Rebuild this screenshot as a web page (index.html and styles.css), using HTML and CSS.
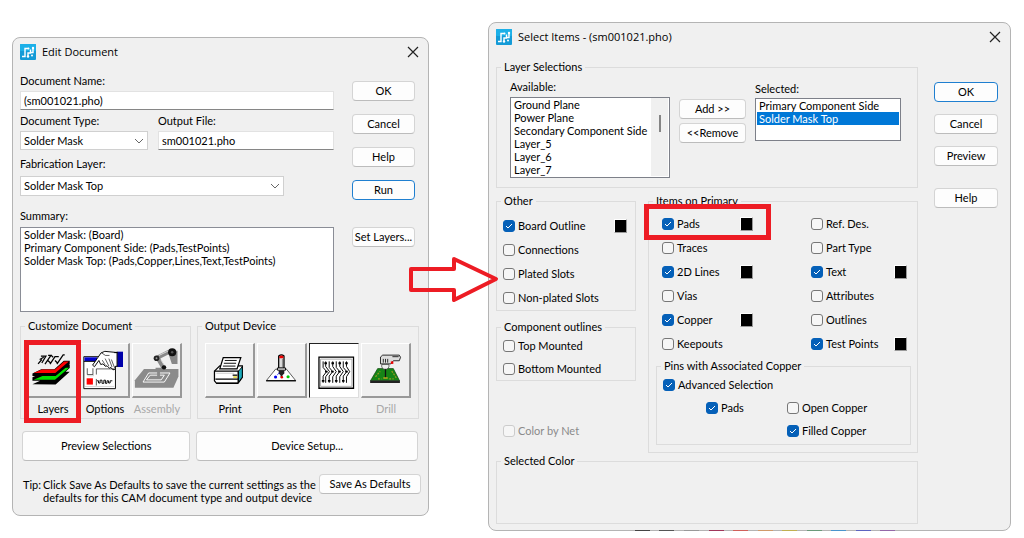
FILE: index.html
```html
<!DOCTYPE html>
<html lang="en">
<head>
    <meta charset="UTF-8">
    <meta name="viewport" content="width=device-width, initial-scale=1.0">
    <title>Edit Document</title>
    <link rel="stylesheet" href="styles.css">
</head>
<body>
    <svg class="symbols" aria-hidden="true">
        <symbol id="app-logo" viewBox="0 0 16 16">
            <rect width="16" height="16" rx="1" fill="#149bd7"/>
            <rect width="16" height="7" rx="1" fill="#1cb0e8"/>
            <path d="M2 12.500h3V4.500h3.500M8 13V9h2.500V5.500M10.500 8.500H13V4" fill="none" stroke="#fff" stroke-width="1.400"/>
            <circle cx="8.500" cy="4.500" r="1" fill="#fff"/>
            <circle cx="13" cy="4" r="1.200" fill="#fff"/>
            <circle cx="8" cy="12.500" r="1.200" fill="#fff"/>
            <circle cx="12" cy="11.500" r="1" fill="#fff"/>
        </symbol>
        <symbol id="close-x" viewBox="0 0 12 12">
            <path d="M1 1l10 10M11 1L1 11" stroke="#222" stroke-width="1.200"/>
        </symbol>
    </svg>

    <main class="desktop">
        <section class="window window-edit">
            <header class="title-bar">
                <svg class="logo"><use href="#app-logo"/></svg>
                <h1>Edit Document</h1>
                <button class="close" aria-label="Close"><svg><use href="#close-x"/></svg></button>
            </header>

            <div class="edit-top">
                <div class="fields">
                    <div class="field">
                        <label for="docName">Document Name:</label>
                        <input type="text" id="docName" value="(sm001021.pho)">
                    </div>
                    <div class="field-row">
                        <div class="field">
                            <label for="docType">Document Type:</label>
                            <select id="docType"><option>Solder Mask</option></select>
                        </div>
                        <div class="field">
                            <label for="outFile">Output File:</label>
                            <input type="text" id="outFile" value="sm001021.pho">
                        </div>
                    </div>
                    <div class="field fab">
                        <label for="fabLayer">Fabrication Layer:</label>
                        <select id="fabLayer"><option>Solder Mask Top</option></select>
                    </div>
                    <div class="field summary">
                        <label for="summary">Summary:</label>
                        <textarea id="summary" readonly>Solder Mask: (Board)
Primary Component Side: (Pads,TestPoints)
Solder Mask Top: (Pads,Copper,Lines,Text,TestPoints)</textarea>
                    </div>
                </div>
                <div class="side-buttons">
                    <button class="btn">OK</button>
                    <button class="btn">Cancel</button>
                    <button class="btn">Help</button>
                    <button class="btn default">Run</button>
                    <button class="btn apart">Set Layers...</button>
                </div>
            </div>

            <div class="tool-groups">
                <fieldset class="tools">
                    <legend>Customize Document</legend>
                    <div class="tool highlighted">
                        <button id="layers" aria-labelledby="layersText">
                            <svg viewBox="57 70 150 165">
                                <path d="M68 198l28-13h42l32-27h17l-45 41zM68 176l28-13h42l32-27h17v10l-45 41H68z" fill="#000"/>
                                <path d="M72 184l28-12h40l32-27h13l-45 39z" fill="#00e000"/>
                                <path d="M68 164l28-14h42l30-27h19v11l-45 38H68z" fill="#000"/>
                                <path d="M72 162l26-11h42l29-26h15l-43 37z" fill="#f00"/>
                                <path d="M86 133l12-14M95 108h16l-13 22M104 112l-13 7M108 134l19-28h-9M117 122l10 9M124 134l16-24h12M134 112l-6-6M140 122l8 8M146 134l20-30h5" fill="none" stroke="#000" stroke-width="4"/>
                            </svg>
                        </button>
                        <span id="layersText">Layers</span>
                    </div>
                    <div class="tool">
                        <button aria-labelledby="optionsText">
                            <svg viewBox="213 70 150 165">
                                <path d="M222 110h101v102H222z" fill="#fff" stroke="#000" stroke-width="3"/>
                                <path d="M224 112h40v12h-40z" fill="#00c"/>
                                <path d="M222 125h46" stroke="#000" stroke-width="3"/>
                                <path d="M250 137l27-39 12-5 42 4v43l-9 1v9l-7 2-7-8-4 3-8-8-5 2-8-8-7 2-6-13-14 20z" fill="#fff" stroke="#000" stroke-width="3"/>
                                <path d="M281 121l10 17M290 116l12 24M302 116l10 27M310 119l10 26M279 98l12 8h13" fill="none" stroke="#000" stroke-width="2"/>
                                <path d="M329 94h18v49h-18z" fill="#00a"/>
                                <path d="M328 94v49M319 97h10" stroke="#000" stroke-width="3"/>
                                <path d="M233 147v20h18v-20M262 167v-18h57M262 202v-21" fill="none" stroke="#000" stroke-width="2"/>
                                <path d="M231 179h20v20h-20z" fill="#f00"/>
                                <path d="M264 187h5v7h5v-9h6v10h6v-10h5v10h5v-8h5v7h5v-7h7" fill="none" stroke="#000" stroke-width="3"/>
                                <path d="M225 205h94M253 147v24h-20" fill="none" stroke="#bbb" stroke-width="2"/>
                            </svg>
                        </button>
                        <span id="optionsText">Options</span>
                    </div>
                    <div class="tool disabled">
                        <button disabled aria-labelledby="assemblyText">
                            <svg viewBox="368 70 150 165">
                                <path d="M403 149h110v24l-16 36H374v-24z" fill="#8b8b8b"/>
                                <path d="M418 162h68l-18 29h-68z" fill="#8b8b8b" stroke="#fff" stroke-width="3"/>
                                <path d="M423 169h45l-10 15h-47z" fill="none" stroke="#fff" stroke-width="3"/>
                                <path d="M484 94l-38 19 19 32" fill="none" stroke="#888" stroke-width="13"/>
                                <path d="M490 91h20v42h-18l-9-27zM440 145h26v12h-12v22h-9v-22h-5z" fill="#888"/>
                                <path d="M451 106l31-15M469 139l-12-19" stroke="#ddd" stroke-width="3"/>
                                <circle cx="493" cy="96" r="13" fill="#111"/>
                                <circle cx="443" cy="115" r="9" fill="#222"/>
                                <circle cx="467" cy="144" r="7" fill="#111"/>
                                <circle cx="493" cy="96" r="4" fill="#555"/>
                                <circle cx="443" cy="115" r="3" fill="#999"/>
                            </svg>
                        </button>
                        <span id="assemblyText">Assembly</span>
                    </div>
                </fieldset>
                <fieldset class="tools">
                    <legend>Output Device</legend>
                    <div class="tool">
                        <button aria-labelledby="printText">
                            <svg viewBox="16 70 150 165">
                                <path d="M43 156l17-17h72v37l-14 19H50l-7-8z" fill="#fff" stroke="#000" stroke-width="4"/>
                                <path d="M119 157l13-15v33l-13 18z" fill="#19a9b9" stroke="#000" stroke-width="3"/>
                                <path d="M43 156h76v37M50 194h68M46 182h71" fill="none" stroke="#000" stroke-width="4"/>
                                <path d="M60 149l11-36h56l-12 36z" fill="#fff" stroke="#000" stroke-width="4"/>
                                <path d="M76 122h38M73 131h39M70 140h40" stroke="#000" stroke-width="3"/>
                                <path d="M49 163h57" stroke="#ccc" stroke-width="3"/>
                                <path d="M101 169h15" stroke="#000" stroke-width="4"/>
                                <path d="M103 175h12" stroke="#dc0" stroke-width="4"/>
                            </svg>
                        </button>
                        <span id="printText">Print</span>
                    </div>
                    <div class="tool">
                        <button aria-labelledby="penText">
                            <svg viewBox="173 70 150 165">
                                <path d="M229 150h35l29 36H200z" fill="#fff" stroke="#000" stroke-width="2"/>
                                <path d="M199 187h95" stroke="#000" stroke-width="4"/>
                                <path d="M239 108q9-8 17 0v39h-17z" fill="#ddd" stroke="#000" stroke-width="4"/>
                                <path d="M241 108q7-4 13 0v7h-13z" fill="#e00"/>
                                <path d="M251 117v28" stroke="#888" stroke-width="3"/>
                                <path d="M235 146h26v7h-26z" fill="#fff" stroke="#000" stroke-width="3"/>
                                <path d="M239 153h18v11l-6 5v7h-6v-7l-6-5z" fill="#222"/>
                                <circle cx="229" cy="175" r="5" fill="#00e"/>
                                <circle cx="269" cy="174" r="5" fill="#0c0"/>
                                <circle cx="249" cy="176" r="4" fill="#e00"/>
                                <path d="M234 169l8-9" stroke="#00e" stroke-width="2"/>
                            </svg>
                        </button>
                        <span id="penText">Pen</span>
                    </div>
                    <div class="tool pressed">
                        <button aria-pressed="true" aria-labelledby="photoText">
                            <svg viewBox="331 70 150 165">
                                <path d="M359 111h108v97H359z" fill="#fff" stroke="#000" stroke-width="4"/>
                                <path d="M364 117h98v85h-98z" fill="none" stroke="#aaa" stroke-width="3"/>
                                <g fill="none" stroke="#000" stroke-width="3">
                                    <path d="M372 124v19l11 13-11 14v21M380 124v16l12 16-12 16v19M391 124v19l11 13-11 14v21M402 124v16l11 16-11 16v19M413 124v19l11 13-11 14v21M424 124v16l11 16-11 16v19M435 124v19l11 13-11 14v21M445 124v16l10 16-10 16v19"/>
                                    <path d="M376 130h8M398 130h8M420 130h8M441 130h8M368 185h8M387 185h8M409 185h8M431 185h8M378 156h8M397 156h8M419 156h8M441 156h8" stroke-width="6"/>
                                </g>
                            </svg>
                        </button>
                        <span id="photoText">Photo</span>
                    </div>
                    <div class="tool disabled">
                        <button disabled aria-labelledby="drillText">
                            <svg viewBox="488 70 150 165">
                                <path d="M538 148h50l20 39H515z" fill="#168416" stroke="#053c05" stroke-width="2"/>
                                <path d="M514 186h95v8h-95z" fill="#222"/>
                                <path d="M531 174l15-17M583 156l16 24M539 181h11M575 181h14" stroke="#9a9a20" stroke-width="4" stroke-dasharray="6 4"/>
                                <path d="M547 111l7-6h53l4 7-4 11h-19l-8 10h-33z" fill="#ddd" stroke="#222" stroke-width="3"/>
                                <path d="M556 117v12M563 117v12M570 117v12M585 110h20" stroke="#222" stroke-width="3"/>
                                <path d="M580 125h8v8h-8z" fill="#e00"/>
                                <path d="M551 135h23v8l-6 7h-11l-6-7z" fill="#eee" stroke="#222" stroke-width="2"/>
                                <path d="M563 150v28" stroke="#111" stroke-width="4"/>
                                <path d="M556 178h14" stroke="#e0b020" stroke-width="4"/>
                            </svg>
                        </button>
                        <span id="drillText">Drill</span>
                    </div>
                </fieldset>
            </div>

            <div class="wide-buttons">
                <button class="btn">Preview Selections</button>
                <button class="btn">Device Setup...</button>
            </div>

            <div class="tip-row">
                <span>Tip:</span>
                <p>Click Save As Defaults to save the current settings as the<br>defaults for this CAM document type and output device</p>
                <button class="btn">Save As Defaults</button>
            </div>
        </section>

        <section class="window window-select">
            <header class="title-bar">
                <svg class="logo"><use href="#app-logo"/></svg>
                <h1>Select Items - (sm001021.pho)</h1>
                <button class="close" aria-label="Close"><svg><use href="#close-x"/></svg></button>
            </header>

            <div class="select-body">
                <div class="select-main">
                    <fieldset>
                        <legend>Layer Selections</legend>
                        <div class="layers">
                            <div class="list-col">
                                <label for="available">Available:</label>
                                <div class="list-frame">
                                    <select id="available" size="6">
                                        <option>Ground Plane</option>
                                        <option>Power Plane</option>
                                        <option>Secondary Component Side</option>
                                        <option>Layer_5</option>
                                        <option>Layer_6</option>
                                        <option>Layer_7</option>
                                    </select>
                                    <div class="rail"><span></span></div>
                                </div>
                            </div>
                            <div class="move-buttons">
                                <button class="btn">Add &gt;&gt;</button>
                                <button class="btn">&lt;&lt;Remove</button>
                            </div>
                            <div class="list-col selected">
                                <label for="selected">Selected:</label>
                                <div class="list-frame">
                                    <select id="selected" size="3">
                                        <option>Primary Component Side</option>
                                        <option selected>Solder Mask Top</option>
                                    </select>
                                </div>
                            </div>
                        </div>
                    </fieldset>

                    <div class="item-groups">
                        <div class="left-groups">
                            <fieldset>
                                <legend>Other</legend>
                                <div class="checks other">
                                    <div class="check-row">
                                        <label class="check"><input type="checkbox" checked>Board Outline</label>
                                        <span class="swatch"></span>
                                    </div>
                                    <label class="check"><input type="checkbox">Connections</label>
                                    <label class="check"><input type="checkbox">Plated Slots</label>
                                    <label class="check"><input type="checkbox">Non-plated Slots</label>
                                </div>
                            </fieldset>
                            <fieldset>
                                <legend>Component outlines</legend>
                                <div class="checks compact">
                                    <label class="check"><input type="checkbox">Top Mounted</label>
                                    <label class="check"><input type="checkbox">Bottom Mounted</label>
                                </div>
                            </fieldset>
                            <label class="check by-net"><input type="checkbox" disabled>Color by Net</label>
                        </div>

                        <fieldset class="items">
                            <legend>Items on Primary</legend>
                            <div class="item-grid">
                                <label class="check first"><input type="checkbox" checked>Pads</label>
                                <span class="swatch"></span>
                                <label class="check second"><input type="checkbox">Ref. Des.</label>
                                <label class="check first"><input type="checkbox">Traces</label>
                                <label class="check second"><input type="checkbox">Part Type</label>
                                <label class="check first"><input type="checkbox" checked>2D Lines</label>
                                <span class="swatch"></span>
                                <label class="check second"><input type="checkbox" checked>Text</label>
                                <span class="swatch"></span>
                                <label class="check first"><input type="checkbox">Vias</label>
                                <label class="check second"><input type="checkbox">Attributes</label>
                                <label class="check first"><input type="checkbox" checked>Copper</label>
                                <span class="swatch"></span>
                                <label class="check second"><input type="checkbox">Outlines</label>
                                <label class="check first"><input type="checkbox">Keepouts</label>
                                <label class="check second"><input type="checkbox" checked>Test Points</label>
                                <span class="swatch"></span>
                            </div>
                            <fieldset class="pins">
                                <legend>Pins with Associated Copper</legend>
                                <div class="pin-grid">
                                    <label class="check advanced"><input type="checkbox" checked>Advanced Selection</label>
                                    <label class="check pads"><input type="checkbox" checked>Pads</label>
                                    <label class="check"><input type="checkbox">Open Copper</label>
                                    <label class="check filled"><input type="checkbox" checked>Filled Copper</label>
                                </div>
                            </fieldset>
                        </fieldset>
                    </div>

                    <fieldset class="selected-color">
                        <legend>Selected Color</legend>
                    </fieldset>
                </div>

                <div class="side-buttons">
                    <button class="btn default">OK</button>
                    <button class="btn">Cancel</button>
                    <button class="btn">Preview</button>
                    <button class="btn apart">Help</button>
                </div>
            </div>

            <!-- edge of the palette behind the dialog -->
            <div class="palette">
                <i class="c1"></i><i class="c2"></i><i class="c3"></i><i class="c4"></i><i class="c5"></i><i class="c6"></i>
                <i class="c7"></i><i class="c8"></i><i class="c9"></i><i class="c10"></i><i class="c11"></i>
            </div>
        </section>

        <svg class="arrow" viewBox="0 0 90 48">
            <path d="M2 13h43V3l42 20-42 21V34H2z" fill="none" stroke="#ed1c24" stroke-width="4" stroke-linejoin="round"/>
        </svg>
    </main>
</body>
</html>
```
FILE: styles.css
```css
*,
*::after {
    box-sizing: border-box;
}

body {
    margin: 0;
    background-color: #fff;
    color: #000;
    font: 11px/14px Lato, "Liberation Sans", Arial, sans-serif;
}

button,
input,
select,
textarea {
    margin: 0;
    font: inherit;
    color: inherit;
}

.symbols {
    display: none;
}

.desktop {
    position: relative;
    display: grid;
    grid-template-columns: 417fr 523fr;
    gap: 59px;
    align-items: start;
    padding: 22px 13px 0 12px;
}

.window {
    position: relative;
    min-width: 0;
    background-color: #f0f0f0;
    border: 1px solid #b4b4b4;
    border-radius: 8px;
}

.window-edit {
    margin-top: 15px;
    padding-bottom: 11px;
}

.title-bar {
    display: flex;
    align-items: center;
    height: 28px;
    padding: 0 8px 0 7px;
}

.title-bar h1 {
    flex: 1;
    margin: 0 0 0 6px;
    font: 11px/16px "Open Sans", "Noto Sans", sans-serif;
}

.logo {
    width: 16px;
    height: 16px;
}

.close {
    display: flex;
    padding: 1px;
    border: 0;
    background: none;
}

.close svg {
    width: 12px;
    height: 12px;
}

/* Buttons */
.btn {
    height: 20px;
    padding: 0;
    background-color: #fdfdfd;
    border: 1px solid #d4d4d4;
    border-bottom-color: #bcbcbc;
    border-radius: 4px;
    text-align: center;
    white-space: nowrap;
}

.btn.default {
    border-color: #1f7fd0;
}

.side-buttons {
    display: flex;
    flex-direction: column;
}

/* Edit Document */
.edit-top {
    display: grid;
    grid-template-columns: 1fr 63px;
    gap: 18px;
    padding: 8px 13px 0 7px;
}

.edit-top .side-buttons {
    gap: 13px;
    padding-top: 7px;
}

.edit-top .apart {
    margin-top: 14px;
}

.field {
    display: flex;
    flex-direction: column;
    gap: 3px;
    margin-bottom: 4px;
}

.field-row {
    display: grid;
    grid-template-columns: 128fr 176fr;
    gap: 10px;
}

.field input,
.field select {
    width: 100%;
    height: 19px;
    padding: 0 3px;
    background-color: #fff;
    border: 1px solid #e2e2e2;
    border-bottom-color: #868686;
}

.field select {
    appearance: none;
    border-color: #d0d0d0;
    background-image: url("data:image/svg+xml,%3Csvg xmlns='http://www.w3.org/2000/svg' width='10' height='6'%3E%3Cpath d='M1 1l4 4 4-4' fill='none' stroke='%23666'/%3E%3C/svg%3E");
    background-repeat: no-repeat;
    background-position: right 3px center;
}

.fab {
    gap: 5px;
    margin-top: 3px;
}

.fab select {
    width: 84%;
    height: 20px;
}

.summary {
    gap: 4px;
    margin: 13px 0 0;
}

.summary textarea {
    height: 85px;
    padding: 0 3px;
    line-height: 13px;
    background-color: #fff;
    border: 1px solid #8a8d96;
    border-radius: 0;
    resize: none;
    overflow: hidden;
}

fieldset {
    min-width: 0;
    margin: 0;
    padding: 0 4px;
    border: 1px solid #dcdcdc;
}

legend {
    height: 14px;
    padding: 0 3px;
}

.tool-groups {
    display: grid;
    grid-template-columns: 171fr 222fr;
    gap: 6px;
    padding: 7px 9px 0 7px;
}

.tools {
    display: flex;
    gap: 2px;
    padding: 10px 4px 2px 7px;
}

.tools legend {
    margin-left: -3px;
}

.tool {
    display: flex;
    flex-direction: column;
    align-items: center;
    gap: 4px;
}

.tool button {
    width: 50px;
    height: 55px;
    padding: 0;
    background-color: #f0f0f0;
    border: 1px solid #fff;
    border-right: 2px solid #999;
    border-bottom: 2px solid #999;
}

.tool svg {
    display: block;
    width: 100%;
    height: 100%;
}

.tool.pressed button {
    background-color: #fff;
    border: 1px solid #222;
    border-right-color: #ddd;
    border-bottom-color: #ddd;
}

.tool.disabled {
    color: #a8a8a8;
}

.highlighted,
.items {
    position: relative;
}

/* red callout frames drawn over the dialog */
.highlighted::after,
.items::after {
    content: "";
    position: absolute;
    border: 5px solid #ed1c24;
    pointer-events: none;
}

.highlighted::after {
    inset: -3px -3px -7px -4px;
}

.wide-buttons {
    display: grid;
    grid-template-columns: 168fr 221fr;
    gap: 6px;
    padding: 12px 10px 0 9px;
}

.wide-buttons .btn {
    height: 30px;
}

.tip-row {
    display: flex;
    align-items: flex-start;
    padding: 13px 7px 0 10px;
}

.tip-row span,
.tip-row p {
    margin: 4px 0 0;
    line-height: 13px;
    white-space: nowrap;
}

.tip-row span {
    width: 20px;
}

.tip-row .btn {
    width: 102px;
    margin-left: auto;
}

/* Select Items */
.select-body {
    display: grid;
    grid-template-columns: 1fr 64px;
    gap: 16px;
    padding: 9px 12px 6px 7px;
}

.select-body .side-buttons {
    gap: 12px;
    padding-top: 22px;
}

.select-body .apart {
    margin-top: 10px;
}

.layers {
    display: grid;
    grid-template-columns: 160fr 67px 146fr;
    gap: 9px;
    padding: 6px 12px 9px 9px;
}

.list-col {
    display: flex;
    flex-direction: column;
    gap: 3px;
    min-width: 0;
}

.list-col.selected {
    padding-top: 2px;
    gap: 2px;
}

.list-frame {
    display: flex;
    padding: 0 1px 1px;
    background-color: #fff;
    border: 1px solid #7d8089;
}

.list-frame select {
    flex: 1;
    min-width: 0;
    padding: 0;
    background: none;
    border: 0;
    border-radius: 0;
    outline: 0;
    overflow: hidden;
}

#available {
    height: 78px;
}

#selected {
    height: 40px;
}

.list-frame option {
    min-height: 13px;
    padding: 0 2px;
    line-height: 13px;
}

.list-frame option:checked {
    background: #0078d7 linear-gradient(#0078d7, #0078d7);
    color: #fff;
}

.rail {
    display: flex;
    justify-content: center;
    width: 17px;
    padding-top: 17px;
    background-color: #f0f0f0;
}

.rail span {
    width: 2px;
    height: 17px;
    background-color: #858585;
}

.move-buttons {
    display: flex;
    flex-direction: column;
    gap: 4px;
    padding-top: 19px;
}

.item-groups {
    display: grid;
    grid-template-columns: 140fr 270fr;
    gap: 12px;
    padding-top: 6px;
}

.left-groups {
    display: flex;
    flex-direction: column;
    gap: 9px;
}

.checks {
    display: flex;
    flex-direction: column;
    padding-left: 2px;
}

.checks.other {
    padding-top: 6px;
}

.check {
    display: flex;
    align-items: center;
    gap: 3px;
    height: 24px;
    white-space: nowrap;
}

.compact .check,
.pin-grid .check {
    height: 23px;
}

.check input {
    appearance: none;
    width: 12px;
    height: 12px;
    background-color: #f6f6f6;
    border: 1px solid #777;
    border-radius: 3px;
}

.check input:checked {
    border-color: #0560b8;
    background: #0560b8 url("data:image/svg+xml,%3Csvg xmlns='http://www.w3.org/2000/svg' width='8' height='6'%3E%3Cpath d='M1 3l2 2 4-4' fill='none' stroke='white'/%3E%3C/svg%3E") no-repeat center;
}

.check input:disabled {
    border-color: #ccc;
}

.check-row {
    display: flex;
    align-items: center;
    justify-content: space-between;
    padding-right: 4px;
}

.swatch {
    align-self: center;
    width: 13px;
    height: 14px;
    background-color: #000;
    border: 1px solid #fff;
    border-right-color: #999;
    border-bottom-color: #999;
}

.by-net {
    margin: auto 0 10px 7px;
    color: #8a8a8a;
}

.item-grid {
    display: grid;
    grid-template-columns: 78fr 71fr 83fr 19fr;
    padding: 4px 0 0 9px;
}

.first {
    grid-column: 1;
}

.second {
    grid-column: 3;
}

.items {
    padding-bottom: 7px;
}

.items::after {
    top: -4px;
    left: -5px;
    width: 127px;
    height: 36px;
}

.pins {
    margin: 3px 2px 0 3px;
}

.pin-grid {
    display: grid;
    grid-template-columns: 127fr 122fr;
    padding: 0 0 2px 2px;
}

.advanced {
    grid-column: 1 / 3;
}

.pads {
    padding-left: 43px;
}

.filled {
    grid-column: 2;
}

.selected-color {
    height: 70px;
    margin-top: 1px;
}

.palette {
    position: absolute;
    top: 100%;
    left: 28%;
    width: 50%;
    height: 1px;
    display: flex;
    justify-content: space-between;
}

.palette i {
    width: 15px;
    height: 1px;
}

.c1 { background-color: #444; }
.c2 { background-color: #555; }
.c3 { background-color: #999; }
.c4 { background-color: #a0365a; }
.c5 { background-color: #d0605a; }
.c6 { background-color: #d09a6a; }
.c7 { background-color: #c0b050; }
.c8 { background-color: #6a9a7a; }
.c9 { background-color: #4a94cc; }
.c10 { background-color: #5c64c0; }
.c11 { background-color: #9468a8; }

.arrow {
    position: absolute;
    top: 256px;
    left: 409px;
    width: 90px;
    height: 48px;
}
```
